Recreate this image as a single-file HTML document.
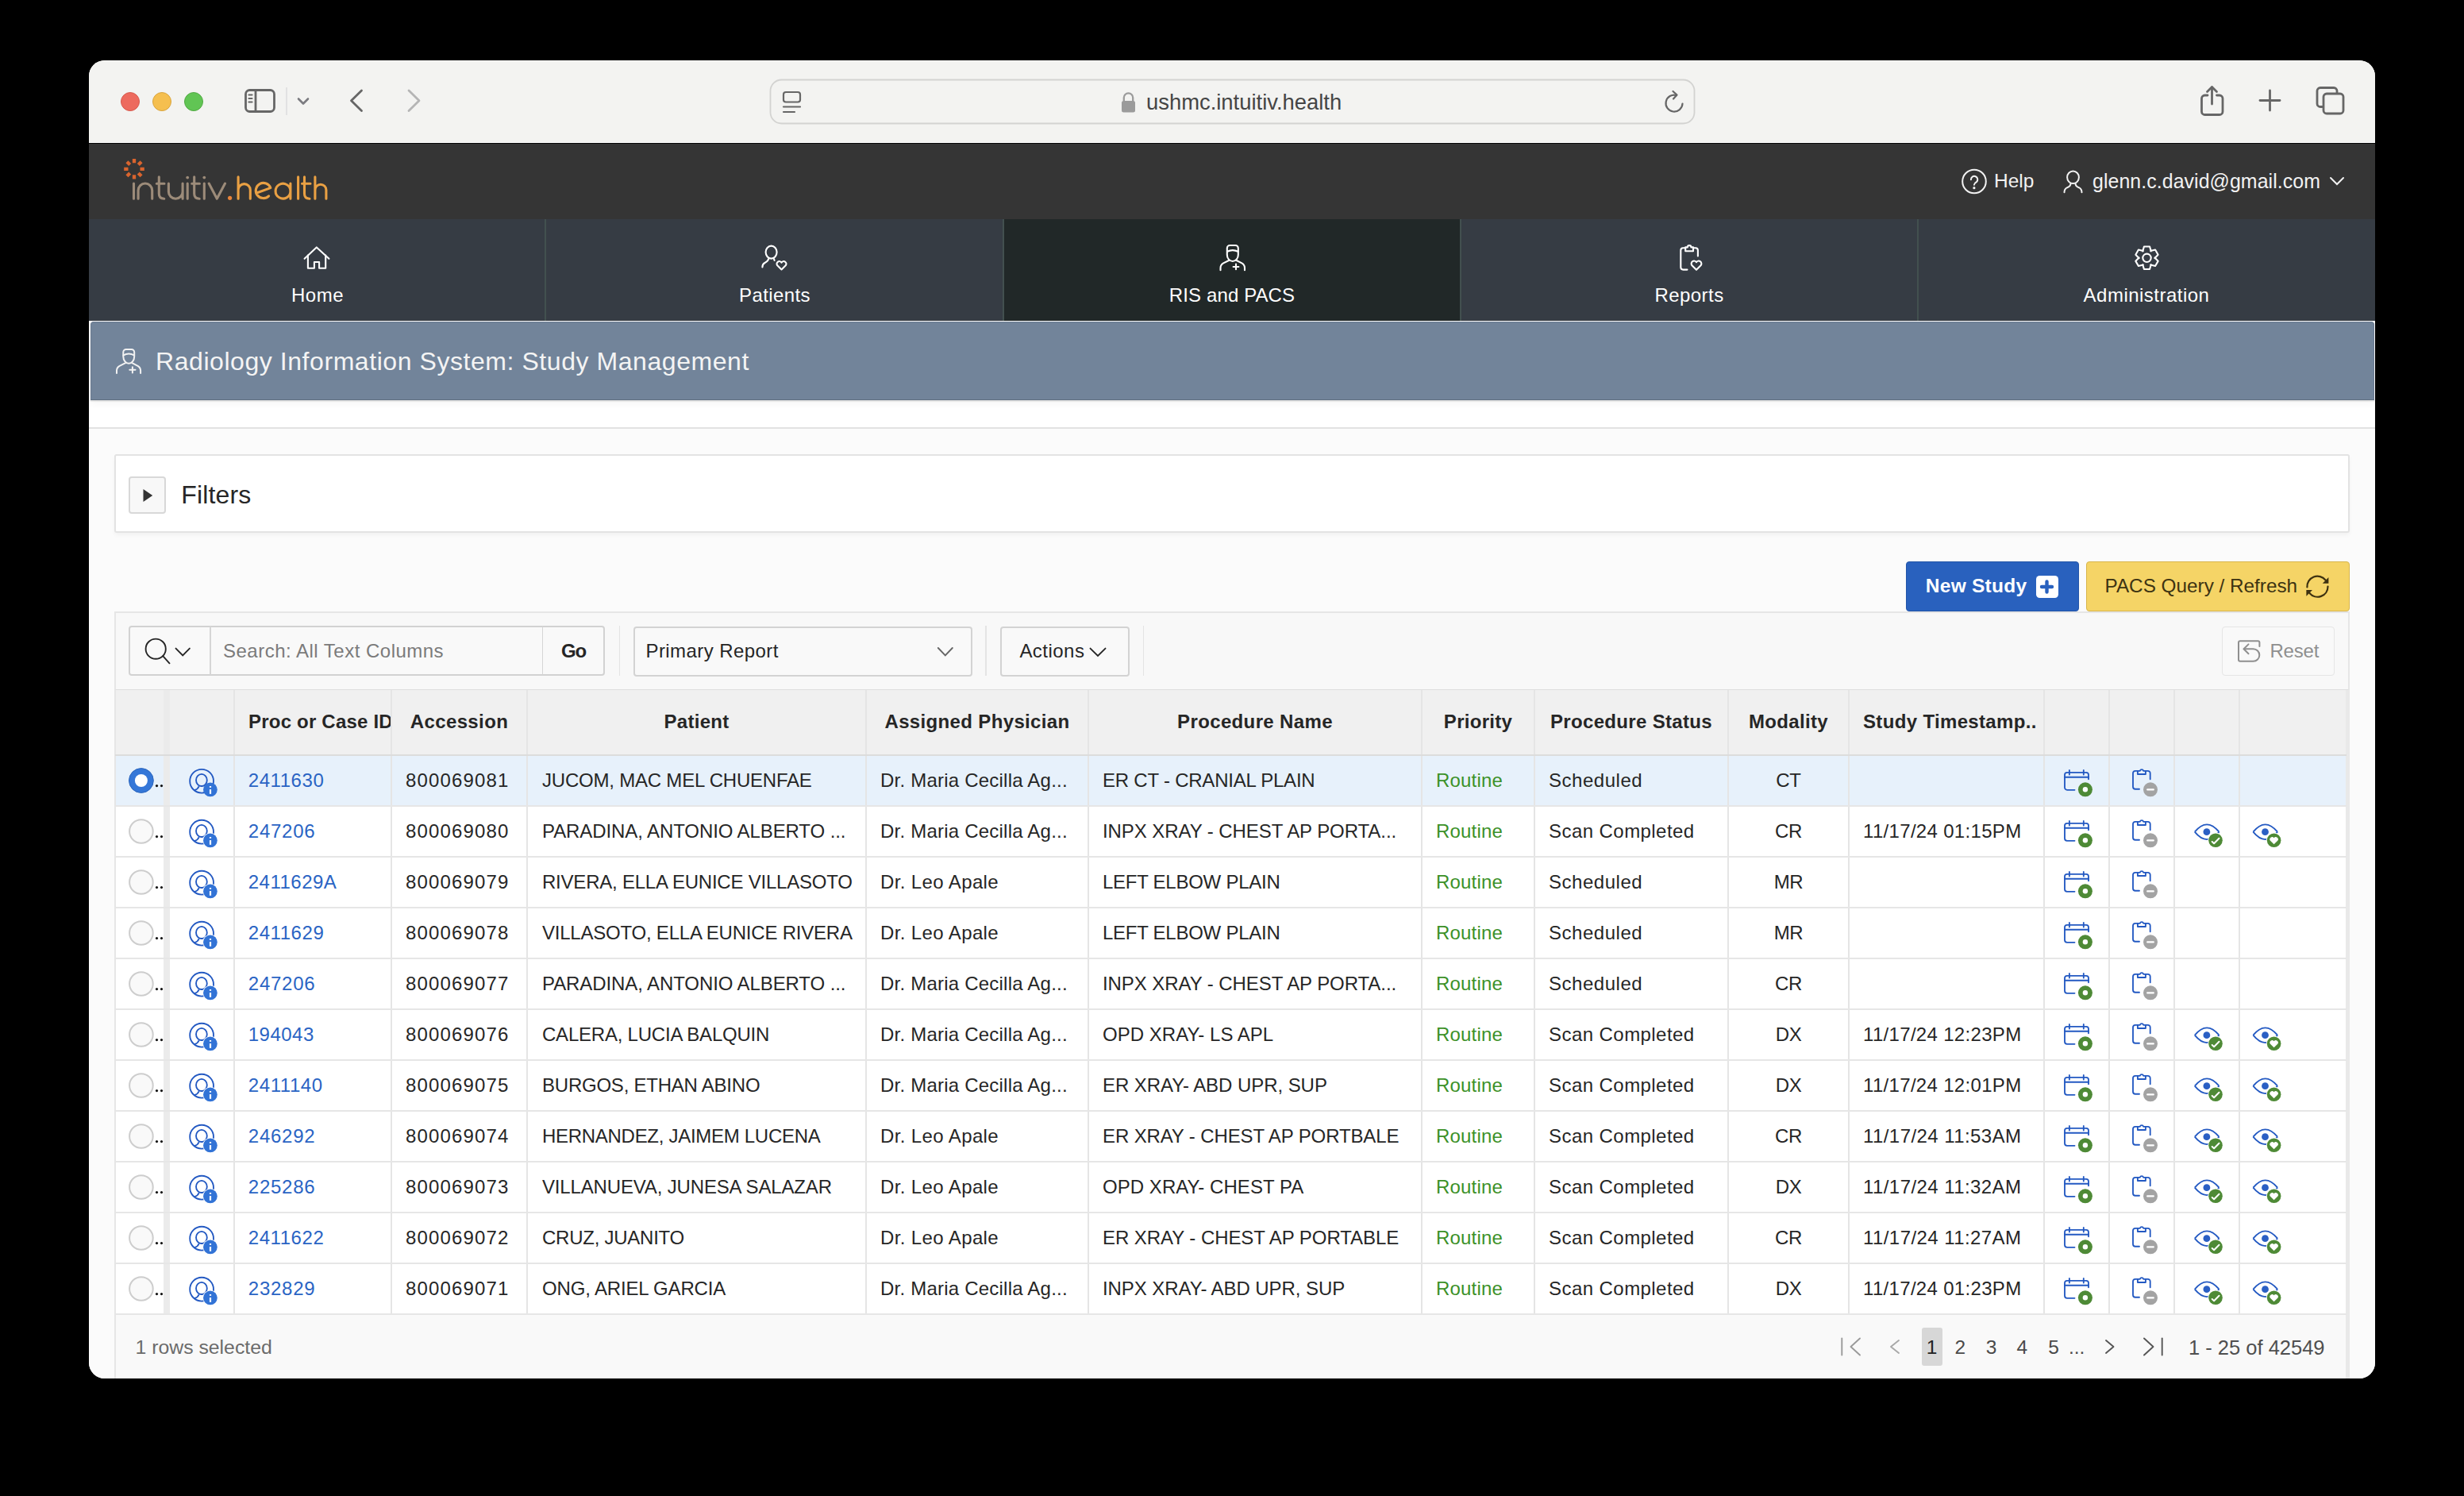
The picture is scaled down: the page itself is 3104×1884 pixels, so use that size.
<!DOCTYPE html>
<html><head><meta charset="utf-8"><title>RIS Study Management</title>
<style>
*{box-sizing:border-box;margin:0;padding:0}
html,body{width:3104px;height:1884px;background:#000;overflow:hidden}
body{font-family:"Liberation Sans", sans-serif;position:relative}
.win{position:absolute;left:112px;top:76px;width:2880px;height:1660px;border-radius:20px;overflow:hidden;background:#fafafa}
.in{position:absolute;left:-112px;top:-76px;width:3104px;height:1884px}
.a{position:absolute}
.t{position:absolute;white-space:nowrap}
svg{position:absolute;overflow:visible}
</style></head><body>
<div class="win"><div class="in">

<div class="a" style="left:112px;top:76px;width:2880px;height:103px;background:#f3f3f1"></div>
<div class="a" style="left:112px;top:179px;width:2880px;height:1px;background:#fff"></div>
<div class="a" style="left:112px;top:180px;width:2880px;height:1px;background:#060606"></div>
<div class="a" style="left:152px;top:116px;width:24px;height:24px;border-radius:50%;background:#ed6a5e;border:1px solid #d75a4e"></div>
<div class="a" style="left:192px;top:116px;width:24px;height:24px;border-radius:50%;background:#f5bf4f;border:1px solid #d9a53f"></div>
<div class="a" style="left:232px;top:116px;width:24px;height:24px;border-radius:50%;background:#61c554;border:1px solid #52a944"></div>
<svg style="left:0;top:0" width="3104" height="200" viewBox="0 0 3104 200">
<g fill="none" stroke="#666" stroke-width="2.8" stroke-linecap="round" stroke-linejoin="round">
<rect x="309.5" y="113.5" width="36" height="27" rx="5"/>
<line x1="322" y1="114" x2="322" y2="140"/>
<line x1="313.5" y1="119.5" x2="317.5" y2="119.5" stroke-width="2.2"/>
<line x1="313.5" y1="124" x2="317.5" y2="124" stroke-width="2.2"/>
<line x1="313.5" y1="128.5" x2="317.5" y2="128.5" stroke-width="2.2"/>
<polyline points="455.5,114 442.5,126.8 455.5,139.5"/>
<polyline points="515,114 528,126.8 515,139.5" stroke="#b5b5b5"/>
<polyline points="376,124.5 382,130.5 388,124.5" stroke="#7b7b80" stroke-width="2.6"/>
</g>
<line x1="361" y1="110" x2="361" y2="145" stroke="#dcdcdc" stroke-width="1.5"/>
<rect x="970.5" y="100.5" width="1164" height="55" rx="14" fill="#f3f3f1" stroke="#d3d3d1" stroke-width="1.8"/>
<g fill="none" stroke="#666" stroke-width="2.2" stroke-linecap="round">
<rect x="987" y="116" width="21" height="12.5" rx="3"/>
<line x1="987" y1="134.5" x2="1008" y2="134.5"/>
<line x1="987" y1="141" x2="1001" y2="141"/>
</g>
<g fill="#9b9b9b">
<rect x="1413" y="127" width="17" height="14.5" rx="2.5"/>
<path d="M1415.8,128 V123 a5.7,5.7 0 0 1 11.4,0 V128" fill="none" stroke="#9b9b9b" stroke-width="2.3"/>
</g>
<g fill="none" stroke="#666" stroke-width="2.2" stroke-linecap="round" stroke-linejoin="round">
<path d="M2119.5,130.5 A10.5,10.5 0 1 1 2112,120"/>
<polyline points="2107.5,115 2112.5,119.5 2108,124.5"/>
</g>
<g fill="none" stroke="#666" stroke-width="2.8" stroke-linecap="round" stroke-linejoin="round">
<path d="M2781,120 H2777.5 a4,4 0 0 0 -4,4 V140.5 a4,4 0 0 0 4,4 H2796 a4,4 0 0 0 4,-4 V124 a4,4 0 0 0 -4,-4 H2792.5"/>
<line x1="2786.5" y1="110" x2="2786.5" y2="131"/>
<polyline points="2780.5,115.5 2786.5,109.5 2792.5,115.5"/>
<line x1="2859.5" y1="114" x2="2859.5" y2="139"/>
<line x1="2847" y1="126.5" x2="2872" y2="126.5"/>
<path d="M2926.5,134.5 H2923 a4,4 0 0 1 -4,-4 V114.5 a4,4 0 0 1 4,-4 H2940 a4,4 0 0 1 4,4 V117.5"/>
<rect x="2927" y="118" width="25" height="25" rx="4"/>
</g>
</svg>
<div class="t" style="left:1444px;top:112.5px;font-size:27.4px;line-height:32px;color:#454545">ushmc.intuitiv.health</div>
<div class="a" style="left:112px;top:181px;width:2880px;height:95px;background:#353535"></div>
<svg style="left:0;top:0" width="600" height="300" viewBox="0 0 600 300"><line x1="169.00" y1="205.30" x2="169.00" y2="200.00" stroke="#d9642e" stroke-width="4.3"/><line x1="174.30" y1="207.50" x2="178.05" y2="203.75" stroke="#d9642e" stroke-width="4.3"/><line x1="176.50" y1="212.80" x2="181.80" y2="212.80" stroke="#d9642e" stroke-width="4.3"/><line x1="174.30" y1="218.10" x2="178.05" y2="221.85" stroke="#d9642e" stroke-width="4.3"/><line x1="169.00" y1="220.30" x2="169.00" y2="225.60" stroke="#d9642e" stroke-width="4.3"/><line x1="163.70" y1="218.10" x2="159.95" y2="221.85" stroke="#d9642e" stroke-width="4.3"/><line x1="161.50" y1="212.80" x2="156.20" y2="212.80" stroke="#d9642e" stroke-width="4.3"/><line x1="163.70" y1="207.50" x2="159.95" y2="203.75" stroke="#d9642e" stroke-width="4.3"/><path d="M168.5,231 V250.2 M174.1,250.2 V239.8 A8.8,8.8 0 0 1 191.7,239.8 V250.2 M200.3,222.8 V244 Q200.3,250.2 206.8,250.2 M197.3,231.2 H207 M212.4,231 V241.4 A8.85,8.85 0 0 0 230.1,241.4 M230.1,231 V250.2 M236.2,231 V250.2 M244.7,222.8 V244 Q244.7,250.2 251.2,250.2 M241.7,231.2 H251.4 M257.3,231 V250.2 M263.2,231 L273.3,250.2 L283.5,231" fill="none" stroke="#9c8b79" stroke-width="3.1" stroke-linecap="round" stroke-linejoin="round"/><circle cx="236.2" cy="223.6" r="1.9" fill="#9c8b79"/><circle cx="257.3" cy="223.6" r="1.9" fill="#9c8b79"/><circle cx="289.6" cy="249.3" r="2.6" fill="#e8843a"/><path d="M300.1,222.8 V250.2 M300.1,239.2 A7.6,7.6 0 0 1 315.3,239.2 V250.2 M322.6,243.2 L340.8,236.6 A9.6,9.6 0 1 0 338.6,246.8 M365.9,240.6 A9.4,9.4 0 1 0 365.9,240.7 M365.9,231 V250.2 M375.6,222.8 V250.2 M383.5,222.8 V244 Q383.5,250.2 390,250.2 M380.5,231.2 H391 M396.9,222.8 V250.2 M396.9,239.2 A7,7 0 0 1 410.9,239.2 V250.2" fill="none" stroke="#e9a043" stroke-width="3.1" stroke-linecap="round" stroke-linejoin="round"/></svg>
<svg style="left:0;top:0" width="3104" height="300" viewBox="0 0 3104 300">
<g fill="none" stroke="#f2f2f2" stroke-width="2" stroke-linecap="round">
<circle cx="2487" cy="228.5" r="14.8"/>
<path d="M2482.9,226.2 A4.2,4.2 0 1 1 2489.9,229.2 Q2486.9,231 2486.9,232.8"/>
<ellipse cx="2611.5" cy="223.3" rx="7.4" ry="7.8"/>
<path d="M2608.5,231 Q2608.5,234.6 2604.2,236.2 Q2600.5,237.8 2600.5,242.3 M2614.5,231 Q2614.5,234.6 2618.8,236.2 Q2622.5,237.8 2622.5,242.3"/>
<polyline points="2936,224 2944,232 2952,224"/>
</g>
<circle cx="2486.9" cy="236.7" r="1.6" fill="#f2f2f2"/>
</svg>
<div class="t" style="left:2512px;top:214px;font-size:24.5px;line-height:28px;color:#f2f2f2">Help</div>
<div class="t" style="left:2636px;top:214px;font-size:24.9px;line-height:28px;color:#f2f2f2;letter-spacing:0.07px;">glenn.c.david@gmail.com</div>
<div class="a" style="left:112px;top:276px;width:2880px;height:128px;background:#363c44"></div>
<div class="a" style="left:1264.5px;top:276px;width:575px;height:128px;background:#212828"></div>
<div class="a" style="left:686px;top:276px;width:1.5px;height:128px;background:#42504f"></div>
<div class="a" style="left:1263.2px;top:276px;width:1.5px;height:128px;background:#42504f"></div>
<div class="a" style="left:1839px;top:276px;width:1.5px;height:128px;background:#42504f"></div>
<div class="a" style="left:2415px;top:276px;width:1.5px;height:128px;background:#42504f"></div>
<div class="t" style="left:200px;top:357px;font-size:24px;line-height:30px;color:#fff;letter-spacing:0.53px;width:400px;text-align:center;">Home</div>
<div class="t" style="left:776px;top:357px;font-size:24px;line-height:30px;color:#fff;letter-spacing:0.42px;width:400px;text-align:center;">Patients</div>
<div class="t" style="left:1352px;top:357px;font-size:24px;line-height:30px;color:#fff;letter-spacing:0.11px;width:400px;text-align:center;">RIS and PACS</div>
<div class="t" style="left:1928px;top:357px;font-size:24px;line-height:30px;color:#fff;letter-spacing:0.45px;width:400px;text-align:center;">Reports</div>
<div class="t" style="left:2504px;top:357px;font-size:24px;line-height:30px;color:#fff;letter-spacing:0.48px;width:400px;text-align:center;">Administration</div>
<svg style="left:0;top:0" width="3104" height="420" viewBox="0 0 3104 420">
<g fill="none" stroke="#fff" stroke-width="2.1" stroke-linecap="round" stroke-linejoin="round">
<polyline points="383.6,325.8 398.8,311.4 414.4,325.8"/>
<path d="M387.9,321.5 V337.8 H395.9 V330 H402.1 V337.8 H410.2 V321.5"/>
<ellipse cx="971.6" cy="317.6" rx="7" ry="8"/>
<path d="M968.3,325.8 Q967.2,329.5 963.5,331 Q960.4,332.6 960.4,336.5"/>
<path d="M975,326 L975.6,328"/>
<path d="M984.5,339.5 L979,334 a3,3 0 0 1 5.5,-3.4 a3,3 0 0 1 5.5,3.4 Z"/>
<path d="M1545.8,321 V312.5 a3.5,3.5 0 0 1 3.5,-3.5 H1556.3 a3.5,3.5 0 0 1 3.5,3.5 V321 a7,8 0 0 1 -14,0"/>
<path d="M1546,316.8 Q1552.8,313.5 1559.6,316.8"/>
<path d="M1548.5,327.8 L1541.2,331.4 Q1537.5,333.4 1537.5,337.5 V340.3"/>
<path d="M1557.2,327.8 L1564.4,331.4 Q1568,333.4 1568,337.5 V340.3"/>
<path d="M1557,332.6 V339.2 M1553.6,336 H1560.4"/>
<path d="M2125.5,339.6 H2120.3 a3,3 0 0 1 -3,-3 V315.2 a3,3 0 0 1 3,-3 H2123.2 M2133,312.2 H2135.9 a3,3 0 0 1 3,3 V322.4"/>
<path d="M2123.2,316.2 V311.4 H2125.8 a2.3,2.3 0 0 1 4.6,0 H2133 V316.2 Z"/>
<path d="M2137,339.8 L2131.2,334 a3.2,3.2 0 0 1 5.8,-3.8 a3.2,3.2 0 0 1 5.8,3.8 Z"/>
</g>

<path d="M2699.25,316.40 L2700.94,310.54 L2708.06,310.54 L2709.75,316.40 L2709.15,316.06 L2715.07,314.59 L2718.63,320.75 L2714.39,325.15 L2714.39,324.45 L2718.63,328.85 L2715.07,335.01 L2709.15,333.54 L2709.75,333.20 L2708.06,339.06 L2700.94,339.06 L2699.25,333.20 L2699.85,333.54 L2693.93,335.01 L2690.37,328.85 L2694.61,324.45 L2694.61,325.15 L2690.37,320.75 L2693.93,314.59 L2699.85,316.06 Z" fill="none" stroke="#fff" stroke-width="2.1" stroke-linejoin="round"/><circle cx="2704.5" cy="324.8" r="5.2" fill="none" stroke="#fff" stroke-width="2.1"/>
</svg>
<div class="a" style="left:112px;top:505px;width:2880px;height:33px;background:#fff"></div>
<div class="a" style="left:112px;top:538px;width:2880px;height:2px;background:#e2e2e2"></div>
<div class="a" style="left:112px;top:540px;width:2880px;height:1196px;background:#fbfbfb"></div>
<div class="a" style="left:112px;top:404px;width:2880px;height:100px;background:#fff"></div>
<div class="a" style="left:114px;top:405px;width:2877px;height:99px;border-radius:4px 4px 0 0;background:#72849a;border:1px solid #6a7b90;border-bottom:1.5px solid #5f6e80;box-shadow:0 1.5px 1px rgba(0,0,0,.07),0 5px 9px rgba(0,0,0,.035)"></div>
<svg style="left:0;top:0" width="600" height="600" viewBox="0 0 600 600">
<g fill="none" stroke="#f2f2f2" stroke-width="2" stroke-linecap="round" stroke-linejoin="round">
<path d="M155.3,449 V443.6 a3.6,3.6 0 0 1 3.6,-3.6 H165.6 a3.6,3.6 0 0 1 3.6,3.6 V449 a6.95,8.7 0 0 1 -13.9,0"/>
<path d="M155.5,447.4 Q162.2,443.6 169,447.4"/>
<path d="M158,457.2 L150.6,460.8 Q147,462.8 147,466.8 V470.1"/>
<path d="M166.5,457.2 L173.6,460.8 Q177.1,462.8 177.1,466.8 V470.1"/>
<path d="M166.9,462.2 V469.4 M163.3,465.8 H170.5"/>
</g></svg>
<div class="t" style="left:196px;top:436px;font-size:32px;line-height:38px;color:#f4f4f4;letter-spacing:0.56px;">Radiology Information System: Study Management</div>
<div class="a" style="left:144px;top:572px;width:2816px;height:99px;background:#fff;border:2px solid #e3e3e3;border-radius:3px;box-shadow:0 3px 5px rgba(0,0,0,.04)"></div>
<div class="a" style="left:162px;top:600px;width:47px;height:47px;background:#f8f8f8;border:2px solid #d8d8d8;border-radius:4px"></div>
<svg style="left:0;top:0" width="400" height="700" viewBox="0 0 400 700"><path d="M180.5,616 L192.2,624 L180.5,632 Z" fill="#333"/></svg>
<div class="t" style="left:228.3px;top:604px;font-size:32px;line-height:38px;color:#262626;letter-spacing:0.16px;">Filters</div>
<div class="a" style="left:2401px;top:707px;width:218px;height:63px;background:#2961be;border:1.5px solid #2355a8;border-radius:4px"></div>
<div class="t" style="left:2425.8px;top:723px;font-size:24.5px;line-height:30px;color:#fff;letter-spacing:0.26px;font-weight:bold;">New Study</div>
<div class="a" style="left:2564.5px;top:724.5px;width:28px;height:28.5px;background:#fff;border-radius:4.5px"></div>
<svg style="left:0;top:0" width="3104" height="800" viewBox="0 0 3104 800"><path d="M2578.5,732.5 V745.5 M2572,739 H2585" stroke="#2961be" stroke-width="4.4" stroke-linecap="round"/></svg>
<div class="a" style="left:2628px;top:707px;width:332px;height:63px;background:#f5d466;border:1.5px solid #d8b64c;border-radius:4px"></div>
<div class="t" style="left:2651.5px;top:723px;font-size:24.3px;line-height:30px;color:#3d3312;letter-spacing:0.00px;">PACS Query / Refresh</div>
<svg style="left:0;top:0" width="3104" height="800" viewBox="0 0 3104 800">
<g fill="none" stroke="#3d3110" stroke-width="2.2" stroke-linecap="round">
<path d="M2906.4,739.5 A13,13 0 0 1 2929.5,730.5"/>
<path d="M2932.5,738.5 A13,13 0 0 1 2909.5,747"/>
</g>
<path d="M2933.4,727 L2933.4,734.8 L2925.8,734.8 Z" fill="#3d3110"/>
<path d="M2905.4,750.8 L2905.4,743 L2913,743 Z" fill="#3d3110"/>
</svg>
<div class="a" style="left:144px;top:770px;width:2816px;height:100px;background:#f8f8f8;border:2px solid #e6e6e6;border-bottom-color:#dedede"></div>
<div class="a" style="left:162px;top:788px;width:600px;height:63px;background:#f9f9f9;border:2px solid #d2d2d2;border-radius:4px"></div>
<div class="a" style="left:264px;top:789px;width:1.8px;height:61px;background:#d6d6d6"></div>
<div class="a" style="left:682.5px;top:789px;width:1.8px;height:61px;background:#d6d6d6"></div>
<div class="t" style="left:281px;top:805px;font-size:24px;line-height:30px;color:#7b7b7b;letter-spacing:0.49px;">Search: All Text Columns</div>
<div class="t" style="left:707px;top:805px;font-size:24px;line-height:30px;color:#262626;letter-spacing:-1.16px;font-weight:bold;">Go</div>
<div class="a" style="left:779.5px;top:788px;width:1.8px;height:63px;background:#e4e4e4"></div>
<div class="a" style="left:798px;top:789px;width:426.5px;height:62.5px;background:#f9f9f9;border:2px solid #d3d3d3;border-radius:4px"></div>
<div class="t" style="left:813.5px;top:805px;font-size:24px;line-height:30px;color:#262626;letter-spacing:0.42px;">Primary Report</div>
<div class="a" style="left:1240.8px;top:788px;width:1.8px;height:63px;background:#e4e4e4"></div>
<div class="a" style="left:1259.5px;top:789px;width:163.5px;height:62.5px;background:#f9f9f9;border:2px solid #d3d3d3;border-radius:4px"></div>
<div class="t" style="left:1284.4px;top:805px;font-size:24px;line-height:30px;color:#262626;letter-spacing:0.47px;">Actions</div>
<div class="a" style="left:1439.5px;top:788px;width:1.8px;height:63px;background:#e4e4e4"></div>
<div class="a" style="left:2798.5px;top:788.5px;width:142.5px;height:62.5px;background:#f9f9f9;border:1.8px solid #e5e5e5;border-radius:4px"></div>
<div class="t" style="left:2859.5px;top:805px;font-size:24px;line-height:30px;color:#8f8f8f;letter-spacing:-0.22px;">Reset</div>
<svg style="left:0;top:0" width="3104" height="900" viewBox="0 0 3104 900">
<g fill="none" stroke="#262626" stroke-width="1.9" stroke-linecap="round">
<circle cx="196.2" cy="817.2" r="12.6"/>
<line x1="205.2" y1="826.2" x2="213.5" y2="835.3"/>
<polyline points="221.5,816.6 230.2,825.4 238.9,816.6"/>
<polyline points="1373.5,816.6 1383,826 1392.5,816.6"/>
</g>
<polyline points="1181.8,816 1190.8,825.4 1199.8,816" fill="none" stroke="#666" stroke-width="1.9" stroke-linecap="round"/>
<g fill="none" stroke="#8f8f8f" stroke-width="2" stroke-linecap="round" stroke-linejoin="round">
<path d="M2846.4,814 V809.3 a2,2 0 0 0 -2,-2 H2822 a2,2 0 0 0 -2,2 V830.8 a2,2 0 0 0 2,2 H2838.5 a7.8,7.8 0 0 0 0,-15.6 H2826.8"/>
<polyline points="2832.5,811.4 2826.5,817.3 2832.5,823.2"/>
</g></svg>
<div class="a" style="left:145px;top:869px;width:2811px;height:82px;background:#f0f0f0"></div>
<div class="a" style="left:145px;top:951px;width:2811px;height:704px;background:#fff"></div>
<div class="a" style="left:145px;top:951px;width:2811px;height:64px;background:#e7f1fb"></div>
<div class="a" style="left:145px;top:1655px;width:2813px;height:81px;background:#f9f9f9"></div>
<div class="a" style="left:206px;top:869px;width:8px;height:786px;background:#ebebeb"></div>
<div class="a" style="left:294.25px;top:869px;width:1.6px;height:786px;background:#e5e5e5"></div>
<div class="a" style="left:492.25px;top:869px;width:1.6px;height:786px;background:#e5e5e5"></div>
<div class="a" style="left:663.25px;top:869px;width:1.6px;height:786px;background:#e5e5e5"></div>
<div class="a" style="left:1090.25px;top:869px;width:1.6px;height:786px;background:#e5e5e5"></div>
<div class="a" style="left:1370.25px;top:869px;width:1.6px;height:786px;background:#e5e5e5"></div>
<div class="a" style="left:1790.25px;top:869px;width:1.6px;height:786px;background:#e5e5e5"></div>
<div class="a" style="left:1932.25px;top:869px;width:1.6px;height:786px;background:#e5e5e5"></div>
<div class="a" style="left:2176.25px;top:869px;width:1.6px;height:786px;background:#e5e5e5"></div>
<div class="a" style="left:2328.25px;top:869px;width:1.6px;height:786px;background:#e5e5e5"></div>
<div class="a" style="left:2574.25px;top:869px;width:1.6px;height:786px;background:#e5e5e5"></div>
<div class="a" style="left:2656.25px;top:869px;width:1.6px;height:786px;background:#e5e5e5"></div>
<div class="a" style="left:2738.25px;top:869px;width:1.6px;height:786px;background:#e5e5e5"></div>
<div class="a" style="left:2820.25px;top:869px;width:1.6px;height:786px;background:#e5e5e5"></div>
<div class="a" style="left:2955px;top:869px;width:5px;height:867px;background:#e9e9e9"></div>
<div class="a" style="left:144px;top:869px;width:2px;height:867px;background:#e6e6e6"></div>
<div class="a" style="left:145px;top:950px;width:2811px;height:2px;background:#dcdcdc"></div>
<div class="a" style="left:145px;top:1014px;width:2811px;height:1.6px;background:#e6e6e6"></div>
<div class="a" style="left:145px;top:1078px;width:2811px;height:1.6px;background:#e6e6e6"></div>
<div class="a" style="left:145px;top:1142px;width:2811px;height:1.6px;background:#e6e6e6"></div>
<div class="a" style="left:145px;top:1206px;width:2811px;height:1.6px;background:#e6e6e6"></div>
<div class="a" style="left:145px;top:1270px;width:2811px;height:1.6px;background:#e6e6e6"></div>
<div class="a" style="left:145px;top:1334px;width:2811px;height:1.6px;background:#e6e6e6"></div>
<div class="a" style="left:145px;top:1398px;width:2811px;height:1.6px;background:#e6e6e6"></div>
<div class="a" style="left:145px;top:1462px;width:2811px;height:1.6px;background:#e6e6e6"></div>
<div class="a" style="left:145px;top:1526px;width:2811px;height:1.6px;background:#e6e6e6"></div>
<div class="a" style="left:145px;top:1590px;width:2811px;height:1.6px;background:#e6e6e6"></div>
<div class="a" style="left:145px;top:1654px;width:2811px;height:1.6px;background:#e6e6e6"></div>
<div class="t" style="left:313px;top:894px;font-size:24px;line-height:30px;color:#262626;letter-spacing:0.21px;font-weight:bold;width:179px;text-align:left;overflow:hidden">Proc or Case ID</div>
<div class="t" style="left:493px;top:894px;font-size:24px;line-height:30px;color:#262626;letter-spacing:0.38px;font-weight:bold;width:171px;text-align:center;">Accession</div>
<div class="t" style="left:664px;top:894px;font-size:24px;line-height:30px;color:#262626;letter-spacing:0.30px;font-weight:bold;width:427px;text-align:center;">Patient</div>
<div class="t" style="left:1091px;top:894px;font-size:24px;line-height:30px;color:#262626;letter-spacing:0.35px;font-weight:bold;width:280px;text-align:center;">Assigned Physician</div>
<div class="t" style="left:1371px;top:894px;font-size:24px;line-height:30px;color:#262626;letter-spacing:0.36px;font-weight:bold;width:420px;text-align:center;">Procedure Name</div>
<div class="t" style="left:1791px;top:894px;font-size:24px;line-height:30px;color:#262626;letter-spacing:0.28px;font-weight:bold;width:142px;text-align:center;">Priority</div>
<div class="t" style="left:1933px;top:894px;font-size:24px;line-height:30px;color:#262626;letter-spacing:0.33px;font-weight:bold;width:244px;text-align:center;">Procedure Status</div>
<div class="t" style="left:2177px;top:894px;font-size:24px;line-height:30px;color:#262626;letter-spacing:0.32px;font-weight:bold;width:152px;text-align:center;">Modality</div>
<div class="t" style="left:2347px;top:894px;font-size:24px;line-height:30px;color:#262626;letter-spacing:0.34px;font-weight:bold;width:227px;text-align:left;overflow:hidden">Study Timestamp..</div>
<div class="t" style="left:312.8px;top:968px;font-size:24px;line-height:30px;color:#2a64c4;letter-spacing:0.55px;">2411630</div>
<div class="t" style="left:511px;top:968px;font-size:24px;line-height:30px;color:#262626;letter-spacing:1.16px;">800069081</div>
<div class="t" style="left:683px;top:968px;font-size:24px;line-height:30px;color:#262626;letter-spacing:-0.21px;">JUCOM, MAC MEL CHUENFAE</div>
<div class="t" style="left:1109px;top:968px;font-size:24px;line-height:30px;color:#262626;letter-spacing:0.22px;">Dr. Maria Cecilla Ag...</div>
<div class="t" style="left:1389px;top:968px;font-size:24px;line-height:30px;color:#262626;letter-spacing:-0.22px;">ER CT - CRANIAL PLAIN</div>
<div class="t" style="left:1809px;top:968px;font-size:24px;line-height:30px;color:#3c9128;letter-spacing:0.18px;">Routine</div>
<div class="t" style="left:1951px;top:968px;font-size:24px;line-height:30px;color:#262626;letter-spacing:0.53px;">Scheduled</div>
<div class="t" style="left:2177px;top:968px;font-size:24px;line-height:30px;color:#262626;letter-spacing:-0.29px;width:152px;text-align:center;">CT</div>
<div class="t" style="left:312.8px;top:1032px;font-size:24px;line-height:30px;color:#2a64c4;letter-spacing:0.75px;">247206</div>
<div class="t" style="left:511px;top:1032px;font-size:24px;line-height:30px;color:#262626;letter-spacing:1.16px;">800069080</div>
<div class="t" style="left:683px;top:1032px;font-size:24px;line-height:30px;color:#262626;letter-spacing:-0.09px;">PARADINA, ANTONIO ALBERTO ...</div>
<div class="t" style="left:1109px;top:1032px;font-size:24px;line-height:30px;color:#262626;letter-spacing:0.22px;">Dr. Maria Cecilla Ag...</div>
<div class="t" style="left:1389px;top:1032px;font-size:24px;line-height:30px;color:#262626;letter-spacing:-0.07px;">INPX XRAY - CHEST AP PORTA...</div>
<div class="t" style="left:1809px;top:1032px;font-size:24px;line-height:30px;color:#3c9128;letter-spacing:0.18px;">Routine</div>
<div class="t" style="left:1951px;top:1032px;font-size:24px;line-height:30px;color:#262626;letter-spacing:0.44px;">Scan Completed</div>
<div class="t" style="left:2177px;top:1032px;font-size:24px;line-height:30px;color:#262626;letter-spacing:-0.31px;width:152px;text-align:center;">CR</div>
<div class="t" style="left:2347px;top:1032px;font-size:24px;line-height:30px;color:#262626;letter-spacing:0.32px;">11/17/24 01:15PM</div>
<div class="t" style="left:312.8px;top:1096px;font-size:24px;line-height:30px;color:#2a64c4;letter-spacing:0.48px;">2411629A</div>
<div class="t" style="left:511px;top:1096px;font-size:24px;line-height:30px;color:#262626;letter-spacing:1.16px;">800069079</div>
<div class="t" style="left:683px;top:1096px;font-size:24px;line-height:30px;color:#262626;letter-spacing:-0.22px;">RIVERA, ELLA EUNICE VILLASOTO</div>
<div class="t" style="left:1109px;top:1096px;font-size:24px;line-height:30px;color:#262626;letter-spacing:0.38px;">Dr. Leo Apale</div>
<div class="t" style="left:1389px;top:1096px;font-size:24px;line-height:30px;color:#262626;letter-spacing:-0.26px;">LEFT ELBOW PLAIN</div>
<div class="t" style="left:1809px;top:1096px;font-size:24px;line-height:30px;color:#3c9128;letter-spacing:0.18px;">Routine</div>
<div class="t" style="left:1951px;top:1096px;font-size:24px;line-height:30px;color:#262626;letter-spacing:0.53px;">Scheduled</div>
<div class="t" style="left:2177px;top:1096px;font-size:24px;line-height:30px;color:#262626;letter-spacing:-0.34px;width:152px;text-align:center;">MR</div>
<div class="t" style="left:312.8px;top:1160px;font-size:24px;line-height:30px;color:#2a64c4;letter-spacing:0.55px;">2411629</div>
<div class="t" style="left:511px;top:1160px;font-size:24px;line-height:30px;color:#262626;letter-spacing:1.16px;">800069078</div>
<div class="t" style="left:683px;top:1160px;font-size:24px;line-height:30px;color:#262626;letter-spacing:-0.22px;">VILLASOTO, ELLA EUNICE RIVERA</div>
<div class="t" style="left:1109px;top:1160px;font-size:24px;line-height:30px;color:#262626;letter-spacing:0.38px;">Dr. Leo Apale</div>
<div class="t" style="left:1389px;top:1160px;font-size:24px;line-height:30px;color:#262626;letter-spacing:-0.26px;">LEFT ELBOW PLAIN</div>
<div class="t" style="left:1809px;top:1160px;font-size:24px;line-height:30px;color:#3c9128;letter-spacing:0.18px;">Routine</div>
<div class="t" style="left:1951px;top:1160px;font-size:24px;line-height:30px;color:#262626;letter-spacing:0.53px;">Scheduled</div>
<div class="t" style="left:2177px;top:1160px;font-size:24px;line-height:30px;color:#262626;letter-spacing:-0.34px;width:152px;text-align:center;">MR</div>
<div class="t" style="left:312.8px;top:1224px;font-size:24px;line-height:30px;color:#2a64c4;letter-spacing:0.75px;">247206</div>
<div class="t" style="left:511px;top:1224px;font-size:24px;line-height:30px;color:#262626;letter-spacing:1.16px;">800069077</div>
<div class="t" style="left:683px;top:1224px;font-size:24px;line-height:30px;color:#262626;letter-spacing:-0.09px;">PARADINA, ANTONIO ALBERTO ...</div>
<div class="t" style="left:1109px;top:1224px;font-size:24px;line-height:30px;color:#262626;letter-spacing:0.22px;">Dr. Maria Cecilla Ag...</div>
<div class="t" style="left:1389px;top:1224px;font-size:24px;line-height:30px;color:#262626;letter-spacing:-0.07px;">INPX XRAY - CHEST AP PORTA...</div>
<div class="t" style="left:1809px;top:1224px;font-size:24px;line-height:30px;color:#3c9128;letter-spacing:0.18px;">Routine</div>
<div class="t" style="left:1951px;top:1224px;font-size:24px;line-height:30px;color:#262626;letter-spacing:0.53px;">Scheduled</div>
<div class="t" style="left:2177px;top:1224px;font-size:24px;line-height:30px;color:#262626;letter-spacing:-0.31px;width:152px;text-align:center;">CR</div>
<div class="t" style="left:312.8px;top:1288px;font-size:24px;line-height:30px;color:#2a64c4;letter-spacing:0.48px;">194043</div>
<div class="t" style="left:511px;top:1288px;font-size:24px;line-height:30px;color:#262626;letter-spacing:1.16px;">800069076</div>
<div class="t" style="left:683px;top:1288px;font-size:24px;line-height:30px;color:#262626;letter-spacing:-0.22px;">CALERA, LUCIA BALQUIN</div>
<div class="t" style="left:1109px;top:1288px;font-size:24px;line-height:30px;color:#262626;letter-spacing:0.22px;">Dr. Maria Cecilla Ag...</div>
<div class="t" style="left:1389px;top:1288px;font-size:24px;line-height:30px;color:#262626;letter-spacing:0.03px;">OPD XRAY- LS APL</div>
<div class="t" style="left:1809px;top:1288px;font-size:24px;line-height:30px;color:#3c9128;letter-spacing:0.18px;">Routine</div>
<div class="t" style="left:1951px;top:1288px;font-size:24px;line-height:30px;color:#262626;letter-spacing:0.44px;">Scan Completed</div>
<div class="t" style="left:2177px;top:1288px;font-size:24px;line-height:30px;color:#262626;letter-spacing:-0.30px;width:152px;text-align:center;">DX</div>
<div class="t" style="left:2347px;top:1288px;font-size:24px;line-height:30px;color:#262626;letter-spacing:0.32px;">11/17/24 12:23PM</div>
<div class="t" style="left:312.8px;top:1352px;font-size:24px;line-height:30px;color:#2a64c4;letter-spacing:0.57px;">2411140</div>
<div class="t" style="left:511px;top:1352px;font-size:24px;line-height:30px;color:#262626;letter-spacing:1.16px;">800069075</div>
<div class="t" style="left:683px;top:1352px;font-size:24px;line-height:30px;color:#262626;letter-spacing:-0.23px;">BURGOS, ETHAN ABINO</div>
<div class="t" style="left:1109px;top:1352px;font-size:24px;line-height:30px;color:#262626;letter-spacing:0.22px;">Dr. Maria Cecilla Ag...</div>
<div class="t" style="left:1389px;top:1352px;font-size:24px;line-height:30px;color:#262626;letter-spacing:-0.06px;">ER XRAY- ABD UPR, SUP</div>
<div class="t" style="left:1809px;top:1352px;font-size:24px;line-height:30px;color:#3c9128;letter-spacing:0.18px;">Routine</div>
<div class="t" style="left:1951px;top:1352px;font-size:24px;line-height:30px;color:#262626;letter-spacing:0.44px;">Scan Completed</div>
<div class="t" style="left:2177px;top:1352px;font-size:24px;line-height:30px;color:#262626;letter-spacing:-0.30px;width:152px;text-align:center;">DX</div>
<div class="t" style="left:2347px;top:1352px;font-size:24px;line-height:30px;color:#262626;letter-spacing:0.32px;">11/17/24 12:01PM</div>
<div class="t" style="left:312.8px;top:1416px;font-size:24px;line-height:30px;color:#2a64c4;letter-spacing:0.75px;">246292</div>
<div class="t" style="left:511px;top:1416px;font-size:24px;line-height:30px;color:#262626;letter-spacing:1.16px;">800069074</div>
<div class="t" style="left:683px;top:1416px;font-size:24px;line-height:30px;color:#262626;letter-spacing:-0.29px;">HERNANDEZ, JAIMEM LUCENA</div>
<div class="t" style="left:1109px;top:1416px;font-size:24px;line-height:30px;color:#262626;letter-spacing:0.38px;">Dr. Leo Apale</div>
<div class="t" style="left:1389px;top:1416px;font-size:24px;line-height:30px;color:#262626;letter-spacing:-0.12px;">ER XRAY - CHEST AP PORTBALE</div>
<div class="t" style="left:1809px;top:1416px;font-size:24px;line-height:30px;color:#3c9128;letter-spacing:0.18px;">Routine</div>
<div class="t" style="left:1951px;top:1416px;font-size:24px;line-height:30px;color:#262626;letter-spacing:0.44px;">Scan Completed</div>
<div class="t" style="left:2177px;top:1416px;font-size:24px;line-height:30px;color:#262626;letter-spacing:-0.31px;width:152px;text-align:center;">CR</div>
<div class="t" style="left:2347px;top:1416px;font-size:24px;line-height:30px;color:#262626;letter-spacing:0.43px;">11/17/24 11:53AM</div>
<div class="t" style="left:312.8px;top:1480px;font-size:24px;line-height:30px;color:#2a64c4;letter-spacing:0.75px;">225286</div>
<div class="t" style="left:511px;top:1480px;font-size:24px;line-height:30px;color:#262626;letter-spacing:1.16px;">800069073</div>
<div class="t" style="left:683px;top:1480px;font-size:24px;line-height:30px;color:#262626;letter-spacing:-0.16px;">VILLANUEVA, JUNESA SALAZAR</div>
<div class="t" style="left:1109px;top:1480px;font-size:24px;line-height:30px;color:#262626;letter-spacing:0.38px;">Dr. Leo Apale</div>
<div class="t" style="left:1389px;top:1480px;font-size:24px;line-height:30px;color:#262626;letter-spacing:0.04px;">OPD XRAY- CHEST PA</div>
<div class="t" style="left:1809px;top:1480px;font-size:24px;line-height:30px;color:#3c9128;letter-spacing:0.18px;">Routine</div>
<div class="t" style="left:1951px;top:1480px;font-size:24px;line-height:30px;color:#262626;letter-spacing:0.44px;">Scan Completed</div>
<div class="t" style="left:2177px;top:1480px;font-size:24px;line-height:30px;color:#262626;letter-spacing:-0.30px;width:152px;text-align:center;">DX</div>
<div class="t" style="left:2347px;top:1480px;font-size:24px;line-height:30px;color:#262626;letter-spacing:0.43px;">11/17/24 11:32AM</div>
<div class="t" style="left:312.8px;top:1544px;font-size:24px;line-height:30px;color:#2a64c4;letter-spacing:0.55px;">2411622</div>
<div class="t" style="left:511px;top:1544px;font-size:24px;line-height:30px;color:#262626;letter-spacing:1.16px;">800069072</div>
<div class="t" style="left:683px;top:1544px;font-size:24px;line-height:30px;color:#262626;letter-spacing:-0.25px;">CRUZ, JUANITO</div>
<div class="t" style="left:1109px;top:1544px;font-size:24px;line-height:30px;color:#262626;letter-spacing:0.38px;">Dr. Leo Apale</div>
<div class="t" style="left:1389px;top:1544px;font-size:24px;line-height:30px;color:#262626;letter-spacing:-0.06px;">ER XRAY - CHEST AP PORTABLE</div>
<div class="t" style="left:1809px;top:1544px;font-size:24px;line-height:30px;color:#3c9128;letter-spacing:0.18px;">Routine</div>
<div class="t" style="left:1951px;top:1544px;font-size:24px;line-height:30px;color:#262626;letter-spacing:0.44px;">Scan Completed</div>
<div class="t" style="left:2177px;top:1544px;font-size:24px;line-height:30px;color:#262626;letter-spacing:-0.31px;width:152px;text-align:center;">CR</div>
<div class="t" style="left:2347px;top:1544px;font-size:24px;line-height:30px;color:#262626;letter-spacing:0.43px;">11/17/24 11:27AM</div>
<div class="t" style="left:312.8px;top:1608px;font-size:24px;line-height:30px;color:#2a64c4;letter-spacing:0.75px;">232829</div>
<div class="t" style="left:511px;top:1608px;font-size:24px;line-height:30px;color:#262626;letter-spacing:1.16px;">800069071</div>
<div class="t" style="left:683px;top:1608px;font-size:24px;line-height:30px;color:#262626;letter-spacing:-0.16px;">ONG, ARIEL GARCIA</div>
<div class="t" style="left:1109px;top:1608px;font-size:24px;line-height:30px;color:#262626;letter-spacing:0.22px;">Dr. Maria Cecilla Ag...</div>
<div class="t" style="left:1389px;top:1608px;font-size:24px;line-height:30px;color:#262626;letter-spacing:-0.07px;">INPX XRAY- ABD UPR, SUP</div>
<div class="t" style="left:1809px;top:1608px;font-size:24px;line-height:30px;color:#3c9128;letter-spacing:0.18px;">Routine</div>
<div class="t" style="left:1951px;top:1608px;font-size:24px;line-height:30px;color:#262626;letter-spacing:0.44px;">Scan Completed</div>
<div class="t" style="left:2177px;top:1608px;font-size:24px;line-height:30px;color:#262626;letter-spacing:-0.30px;width:152px;text-align:center;">DX</div>
<div class="t" style="left:2347px;top:1608px;font-size:24px;line-height:30px;color:#262626;letter-spacing:0.32px;">11/17/24 01:23PM</div>
<svg style="left:0;top:0" width="3104" height="1884" viewBox="0 0 3104 1884"><circle cx="177.9" cy="983" r="15.4" fill="#3577d8" stroke="#2c66bd" stroke-width="1"/><circle cx="177.9" cy="983" r="8" fill="#fff"/><circle cx="197.5" cy="989.6" r="1.6" fill="#111"/><circle cx="203.5" cy="989.6" r="1.6" fill="#111"/><g fill="none" stroke="#2359c2" stroke-width="1.85"><circle cx="254.1" cy="983.7" r="14.9"/><ellipse cx="253.9" cy="982.4" rx="6.9" ry="7.6"/><path d="M250.6,990.2 Q249.5,993.5 245.2,995.1"/></g><circle cx="264.9" cy="994.4" r="9.6" fill="#fff" opacity="0"/><circle cx="264.9" cy="994.4" r="8.85" fill="#3273d6"/><rect x="263.9" y="990" width="2.2" height="1.8" fill="#fff"/><rect x="263.9" y="994.1" width="2.2" height="5.7" fill="#fff"/><g fill="none" stroke="#2359c2" stroke-width="1.85" stroke-linecap="round" stroke-linejoin="round"><path d="M2613.5,994.8 H2604 a3,3 0 0 1 -3,-3 V975.8 a3,3 0 0 1 3,-3 H2628 a3,3 0 0 1 3,3 V981.3"/><line x1="2601" y1="978.7" x2="2631" y2="978.7"/><line x1="2606.9" y1="970" x2="2606.9" y2="975.5"/><line x1="2624.8" y1="970" x2="2624.8" y2="975.5"/></g><circle cx="2626.9" cy="994.3" r="9" fill="#4e8a36"/><circle cx="2626.9" cy="994.3" r="3.2" fill="#fff"/><g fill="none" stroke="#2359c2" stroke-width="1.85" stroke-linecap="round" stroke-linejoin="round"><path d="M2695,993.7 H2690 a3,3 0 0 1 -3,-3 V973.8 a3,3 0 0 1 3,-3 H2692.9 M2702.9,970.8 H2705.7 a3,3 0 0 1 3,3 V981.3"/><path d="M2692.9,975 V970.8 H2695.8 a2.3,2.3 0 0 1 4.4,0 H2702.9 V975 Z"/></g><circle cx="2709" cy="994.3" r="9" fill="#a3a3a3"/><rect x="2704.1" y="993.2" width="9.8" height="2.3" rx="1.1" fill="#fff"/><circle cx="177.9" cy="1047" r="14.8" fill="#f9f9f9" stroke="#cdcdcd" stroke-width="2"/><circle cx="197.5" cy="1053.6" r="1.6" fill="#111"/><circle cx="203.5" cy="1053.6" r="1.6" fill="#111"/><g fill="none" stroke="#2359c2" stroke-width="1.85"><circle cx="254.1" cy="1047.7" r="14.9"/><ellipse cx="253.9" cy="1046.4" rx="6.9" ry="7.6"/><path d="M250.6,1054.2 Q249.5,1057.5 245.2,1059.1"/></g><circle cx="264.9" cy="1058.4" r="9.6" fill="#fff" opacity="1"/><circle cx="264.9" cy="1058.4" r="8.85" fill="#3273d6"/><rect x="263.9" y="1054" width="2.2" height="1.8" fill="#fff"/><rect x="263.9" y="1058.1" width="2.2" height="5.7" fill="#fff"/><g fill="none" stroke="#2359c2" stroke-width="1.85" stroke-linecap="round" stroke-linejoin="round"><path d="M2613.5,1058.8 H2604 a3,3 0 0 1 -3,-3 V1039.8 a3,3 0 0 1 3,-3 H2628 a3,3 0 0 1 3,3 V1045.3"/><line x1="2601" y1="1042.7" x2="2631" y2="1042.7"/><line x1="2606.9" y1="1034" x2="2606.9" y2="1039.5"/><line x1="2624.8" y1="1034" x2="2624.8" y2="1039.5"/></g><circle cx="2626.9" cy="1058.3" r="9" fill="#4e8a36"/><circle cx="2626.9" cy="1058.3" r="3.2" fill="#fff"/><g fill="none" stroke="#2359c2" stroke-width="1.85" stroke-linecap="round" stroke-linejoin="round"><path d="M2695,1057.7 H2690 a3,3 0 0 1 -3,-3 V1037.8 a3,3 0 0 1 3,-3 H2692.9 M2702.9,1034.8 H2705.7 a3,3 0 0 1 3,3 V1045.3"/><path d="M2692.9,1039 V1034.8 H2695.8 a2.3,2.3 0 0 1 4.4,0 H2702.9 V1039 Z"/></g><circle cx="2709" cy="1058.3" r="9" fill="#a3a3a3"/><rect x="2704.1" y="1057.2" width="9.8" height="2.3" rx="1.1" fill="#fff"/><path d="M2764.8,1047.7 Q2780.0,1029 2795.5,1047.7 M2764.8,1047.7 Q2780.0,1066.4 2795.5,1047.7" fill="none" stroke="#2359c2" stroke-width="1.85" stroke-linejoin="round"/><circle cx="2779.9" cy="1047.7" r="4.4" fill="#2a5fc4"/><circle cx="2791.0" cy="1058.2" r="9.8" fill="#fff"/><circle cx="2791.0" cy="1058.2" r="8.8" fill="#4e8a36"/><polyline points="2786.7,1060.0 2789.1,1062.2 2795.5,1055.8" fill="none" stroke="#fff" stroke-width="2" stroke-linecap="round" stroke-linejoin="round"/><path d="M2838.4,1047.7 Q2853.6,1029 2869.1,1047.7 M2838.4,1047.7 Q2853.6,1066.4 2869.1,1047.7" fill="none" stroke="#2359c2" stroke-width="1.85" stroke-linejoin="round"/><circle cx="2853.5" cy="1047.7" r="4.4" fill="#2a5fc4"/><circle cx="2864.6" cy="1058.2" r="9.8" fill="#fff"/><circle cx="2864.6" cy="1058.2" r="8.8" fill="#4e8a36"/><path d="M2864.6,1063.2 L2860.0,1058.8 a2.7,2.7 0 0 1 4.6,-3.6 a2.7,2.7 0 0 1 4.6,3.6 Z" fill="#fff"/><circle cx="177.9" cy="1111" r="14.8" fill="#f9f9f9" stroke="#cdcdcd" stroke-width="2"/><circle cx="197.5" cy="1117.6" r="1.6" fill="#111"/><circle cx="203.5" cy="1117.6" r="1.6" fill="#111"/><g fill="none" stroke="#2359c2" stroke-width="1.85"><circle cx="254.1" cy="1111.7" r="14.9"/><ellipse cx="253.9" cy="1110.4" rx="6.9" ry="7.6"/><path d="M250.6,1118.2 Q249.5,1121.5 245.2,1123.1"/></g><circle cx="264.9" cy="1122.4" r="9.6" fill="#fff" opacity="1"/><circle cx="264.9" cy="1122.4" r="8.85" fill="#3273d6"/><rect x="263.9" y="1118" width="2.2" height="1.8" fill="#fff"/><rect x="263.9" y="1122.1" width="2.2" height="5.7" fill="#fff"/><g fill="none" stroke="#2359c2" stroke-width="1.85" stroke-linecap="round" stroke-linejoin="round"><path d="M2613.5,1122.8 H2604 a3,3 0 0 1 -3,-3 V1103.8 a3,3 0 0 1 3,-3 H2628 a3,3 0 0 1 3,3 V1109.3"/><line x1="2601" y1="1106.7" x2="2631" y2="1106.7"/><line x1="2606.9" y1="1098" x2="2606.9" y2="1103.5"/><line x1="2624.8" y1="1098" x2="2624.8" y2="1103.5"/></g><circle cx="2626.9" cy="1122.3" r="9" fill="#4e8a36"/><circle cx="2626.9" cy="1122.3" r="3.2" fill="#fff"/><g fill="none" stroke="#2359c2" stroke-width="1.85" stroke-linecap="round" stroke-linejoin="round"><path d="M2695,1121.7 H2690 a3,3 0 0 1 -3,-3 V1101.8 a3,3 0 0 1 3,-3 H2692.9 M2702.9,1098.8 H2705.7 a3,3 0 0 1 3,3 V1109.3"/><path d="M2692.9,1103 V1098.8 H2695.8 a2.3,2.3 0 0 1 4.4,0 H2702.9 V1103 Z"/></g><circle cx="2709" cy="1122.3" r="9" fill="#a3a3a3"/><rect x="2704.1" y="1121.2" width="9.8" height="2.3" rx="1.1" fill="#fff"/><circle cx="177.9" cy="1175" r="14.8" fill="#f9f9f9" stroke="#cdcdcd" stroke-width="2"/><circle cx="197.5" cy="1181.6" r="1.6" fill="#111"/><circle cx="203.5" cy="1181.6" r="1.6" fill="#111"/><g fill="none" stroke="#2359c2" stroke-width="1.85"><circle cx="254.1" cy="1175.7" r="14.9"/><ellipse cx="253.9" cy="1174.4" rx="6.9" ry="7.6"/><path d="M250.6,1182.2 Q249.5,1185.5 245.2,1187.1"/></g><circle cx="264.9" cy="1186.4" r="9.6" fill="#fff" opacity="1"/><circle cx="264.9" cy="1186.4" r="8.85" fill="#3273d6"/><rect x="263.9" y="1182" width="2.2" height="1.8" fill="#fff"/><rect x="263.9" y="1186.1" width="2.2" height="5.7" fill="#fff"/><g fill="none" stroke="#2359c2" stroke-width="1.85" stroke-linecap="round" stroke-linejoin="round"><path d="M2613.5,1186.8 H2604 a3,3 0 0 1 -3,-3 V1167.8 a3,3 0 0 1 3,-3 H2628 a3,3 0 0 1 3,3 V1173.3"/><line x1="2601" y1="1170.7" x2="2631" y2="1170.7"/><line x1="2606.9" y1="1162" x2="2606.9" y2="1167.5"/><line x1="2624.8" y1="1162" x2="2624.8" y2="1167.5"/></g><circle cx="2626.9" cy="1186.3" r="9" fill="#4e8a36"/><circle cx="2626.9" cy="1186.3" r="3.2" fill="#fff"/><g fill="none" stroke="#2359c2" stroke-width="1.85" stroke-linecap="round" stroke-linejoin="round"><path d="M2695,1185.7 H2690 a3,3 0 0 1 -3,-3 V1165.8 a3,3 0 0 1 3,-3 H2692.9 M2702.9,1162.8 H2705.7 a3,3 0 0 1 3,3 V1173.3"/><path d="M2692.9,1167 V1162.8 H2695.8 a2.3,2.3 0 0 1 4.4,0 H2702.9 V1167 Z"/></g><circle cx="2709" cy="1186.3" r="9" fill="#a3a3a3"/><rect x="2704.1" y="1185.2" width="9.8" height="2.3" rx="1.1" fill="#fff"/><circle cx="177.9" cy="1239" r="14.8" fill="#f9f9f9" stroke="#cdcdcd" stroke-width="2"/><circle cx="197.5" cy="1245.6" r="1.6" fill="#111"/><circle cx="203.5" cy="1245.6" r="1.6" fill="#111"/><g fill="none" stroke="#2359c2" stroke-width="1.85"><circle cx="254.1" cy="1239.7" r="14.9"/><ellipse cx="253.9" cy="1238.4" rx="6.9" ry="7.6"/><path d="M250.6,1246.2 Q249.5,1249.5 245.2,1251.1"/></g><circle cx="264.9" cy="1250.4" r="9.6" fill="#fff" opacity="1"/><circle cx="264.9" cy="1250.4" r="8.85" fill="#3273d6"/><rect x="263.9" y="1246" width="2.2" height="1.8" fill="#fff"/><rect x="263.9" y="1250.1" width="2.2" height="5.7" fill="#fff"/><g fill="none" stroke="#2359c2" stroke-width="1.85" stroke-linecap="round" stroke-linejoin="round"><path d="M2613.5,1250.8 H2604 a3,3 0 0 1 -3,-3 V1231.8 a3,3 0 0 1 3,-3 H2628 a3,3 0 0 1 3,3 V1237.3"/><line x1="2601" y1="1234.7" x2="2631" y2="1234.7"/><line x1="2606.9" y1="1226" x2="2606.9" y2="1231.5"/><line x1="2624.8" y1="1226" x2="2624.8" y2="1231.5"/></g><circle cx="2626.9" cy="1250.3" r="9" fill="#4e8a36"/><circle cx="2626.9" cy="1250.3" r="3.2" fill="#fff"/><g fill="none" stroke="#2359c2" stroke-width="1.85" stroke-linecap="round" stroke-linejoin="round"><path d="M2695,1249.7 H2690 a3,3 0 0 1 -3,-3 V1229.8 a3,3 0 0 1 3,-3 H2692.9 M2702.9,1226.8 H2705.7 a3,3 0 0 1 3,3 V1237.3"/><path d="M2692.9,1231 V1226.8 H2695.8 a2.3,2.3 0 0 1 4.4,0 H2702.9 V1231 Z"/></g><circle cx="2709" cy="1250.3" r="9" fill="#a3a3a3"/><rect x="2704.1" y="1249.2" width="9.8" height="2.3" rx="1.1" fill="#fff"/><circle cx="177.9" cy="1303" r="14.8" fill="#f9f9f9" stroke="#cdcdcd" stroke-width="2"/><circle cx="197.5" cy="1309.6" r="1.6" fill="#111"/><circle cx="203.5" cy="1309.6" r="1.6" fill="#111"/><g fill="none" stroke="#2359c2" stroke-width="1.85"><circle cx="254.1" cy="1303.7" r="14.9"/><ellipse cx="253.9" cy="1302.4" rx="6.9" ry="7.6"/><path d="M250.6,1310.2 Q249.5,1313.5 245.2,1315.1"/></g><circle cx="264.9" cy="1314.4" r="9.6" fill="#fff" opacity="1"/><circle cx="264.9" cy="1314.4" r="8.85" fill="#3273d6"/><rect x="263.9" y="1310" width="2.2" height="1.8" fill="#fff"/><rect x="263.9" y="1314.1" width="2.2" height="5.7" fill="#fff"/><g fill="none" stroke="#2359c2" stroke-width="1.85" stroke-linecap="round" stroke-linejoin="round"><path d="M2613.5,1314.8 H2604 a3,3 0 0 1 -3,-3 V1295.8 a3,3 0 0 1 3,-3 H2628 a3,3 0 0 1 3,3 V1301.3"/><line x1="2601" y1="1298.7" x2="2631" y2="1298.7"/><line x1="2606.9" y1="1290" x2="2606.9" y2="1295.5"/><line x1="2624.8" y1="1290" x2="2624.8" y2="1295.5"/></g><circle cx="2626.9" cy="1314.3" r="9" fill="#4e8a36"/><circle cx="2626.9" cy="1314.3" r="3.2" fill="#fff"/><g fill="none" stroke="#2359c2" stroke-width="1.85" stroke-linecap="round" stroke-linejoin="round"><path d="M2695,1313.7 H2690 a3,3 0 0 1 -3,-3 V1293.8 a3,3 0 0 1 3,-3 H2692.9 M2702.9,1290.8 H2705.7 a3,3 0 0 1 3,3 V1301.3"/><path d="M2692.9,1295 V1290.8 H2695.8 a2.3,2.3 0 0 1 4.4,0 H2702.9 V1295 Z"/></g><circle cx="2709" cy="1314.3" r="9" fill="#a3a3a3"/><rect x="2704.1" y="1313.2" width="9.8" height="2.3" rx="1.1" fill="#fff"/><path d="M2764.8,1303.7 Q2780.0,1285 2795.5,1303.7 M2764.8,1303.7 Q2780.0,1322.4 2795.5,1303.7" fill="none" stroke="#2359c2" stroke-width="1.85" stroke-linejoin="round"/><circle cx="2779.9" cy="1303.7" r="4.4" fill="#2a5fc4"/><circle cx="2791.0" cy="1314.2" r="9.8" fill="#fff"/><circle cx="2791.0" cy="1314.2" r="8.8" fill="#4e8a36"/><polyline points="2786.7,1316.0 2789.1,1318.2 2795.5,1311.8" fill="none" stroke="#fff" stroke-width="2" stroke-linecap="round" stroke-linejoin="round"/><path d="M2838.4,1303.7 Q2853.6,1285 2869.1,1303.7 M2838.4,1303.7 Q2853.6,1322.4 2869.1,1303.7" fill="none" stroke="#2359c2" stroke-width="1.85" stroke-linejoin="round"/><circle cx="2853.5" cy="1303.7" r="4.4" fill="#2a5fc4"/><circle cx="2864.6" cy="1314.2" r="9.8" fill="#fff"/><circle cx="2864.6" cy="1314.2" r="8.8" fill="#4e8a36"/><path d="M2864.6,1319.2 L2860.0,1314.8 a2.7,2.7 0 0 1 4.6,-3.6 a2.7,2.7 0 0 1 4.6,3.6 Z" fill="#fff"/><circle cx="177.9" cy="1367" r="14.8" fill="#f9f9f9" stroke="#cdcdcd" stroke-width="2"/><circle cx="197.5" cy="1373.6" r="1.6" fill="#111"/><circle cx="203.5" cy="1373.6" r="1.6" fill="#111"/><g fill="none" stroke="#2359c2" stroke-width="1.85"><circle cx="254.1" cy="1367.7" r="14.9"/><ellipse cx="253.9" cy="1366.4" rx="6.9" ry="7.6"/><path d="M250.6,1374.2 Q249.5,1377.5 245.2,1379.1"/></g><circle cx="264.9" cy="1378.4" r="9.6" fill="#fff" opacity="1"/><circle cx="264.9" cy="1378.4" r="8.85" fill="#3273d6"/><rect x="263.9" y="1374" width="2.2" height="1.8" fill="#fff"/><rect x="263.9" y="1378.1" width="2.2" height="5.7" fill="#fff"/><g fill="none" stroke="#2359c2" stroke-width="1.85" stroke-linecap="round" stroke-linejoin="round"><path d="M2613.5,1378.8 H2604 a3,3 0 0 1 -3,-3 V1359.8 a3,3 0 0 1 3,-3 H2628 a3,3 0 0 1 3,3 V1365.3"/><line x1="2601" y1="1362.7" x2="2631" y2="1362.7"/><line x1="2606.9" y1="1354" x2="2606.9" y2="1359.5"/><line x1="2624.8" y1="1354" x2="2624.8" y2="1359.5"/></g><circle cx="2626.9" cy="1378.3" r="9" fill="#4e8a36"/><circle cx="2626.9" cy="1378.3" r="3.2" fill="#fff"/><g fill="none" stroke="#2359c2" stroke-width="1.85" stroke-linecap="round" stroke-linejoin="round"><path d="M2695,1377.7 H2690 a3,3 0 0 1 -3,-3 V1357.8 a3,3 0 0 1 3,-3 H2692.9 M2702.9,1354.8 H2705.7 a3,3 0 0 1 3,3 V1365.3"/><path d="M2692.9,1359 V1354.8 H2695.8 a2.3,2.3 0 0 1 4.4,0 H2702.9 V1359 Z"/></g><circle cx="2709" cy="1378.3" r="9" fill="#a3a3a3"/><rect x="2704.1" y="1377.2" width="9.8" height="2.3" rx="1.1" fill="#fff"/><path d="M2764.8,1367.7 Q2780.0,1349 2795.5,1367.7 M2764.8,1367.7 Q2780.0,1386.4 2795.5,1367.7" fill="none" stroke="#2359c2" stroke-width="1.85" stroke-linejoin="round"/><circle cx="2779.9" cy="1367.7" r="4.4" fill="#2a5fc4"/><circle cx="2791.0" cy="1378.2" r="9.8" fill="#fff"/><circle cx="2791.0" cy="1378.2" r="8.8" fill="#4e8a36"/><polyline points="2786.7,1380.0 2789.1,1382.2 2795.5,1375.8" fill="none" stroke="#fff" stroke-width="2" stroke-linecap="round" stroke-linejoin="round"/><path d="M2838.4,1367.7 Q2853.6,1349 2869.1,1367.7 M2838.4,1367.7 Q2853.6,1386.4 2869.1,1367.7" fill="none" stroke="#2359c2" stroke-width="1.85" stroke-linejoin="round"/><circle cx="2853.5" cy="1367.7" r="4.4" fill="#2a5fc4"/><circle cx="2864.6" cy="1378.2" r="9.8" fill="#fff"/><circle cx="2864.6" cy="1378.2" r="8.8" fill="#4e8a36"/><path d="M2864.6,1383.2 L2860.0,1378.8 a2.7,2.7 0 0 1 4.6,-3.6 a2.7,2.7 0 0 1 4.6,3.6 Z" fill="#fff"/><circle cx="177.9" cy="1431" r="14.8" fill="#f9f9f9" stroke="#cdcdcd" stroke-width="2"/><circle cx="197.5" cy="1437.6" r="1.6" fill="#111"/><circle cx="203.5" cy="1437.6" r="1.6" fill="#111"/><g fill="none" stroke="#2359c2" stroke-width="1.85"><circle cx="254.1" cy="1431.7" r="14.9"/><ellipse cx="253.9" cy="1430.4" rx="6.9" ry="7.6"/><path d="M250.6,1438.2 Q249.5,1441.5 245.2,1443.1"/></g><circle cx="264.9" cy="1442.4" r="9.6" fill="#fff" opacity="1"/><circle cx="264.9" cy="1442.4" r="8.85" fill="#3273d6"/><rect x="263.9" y="1438" width="2.2" height="1.8" fill="#fff"/><rect x="263.9" y="1442.1" width="2.2" height="5.7" fill="#fff"/><g fill="none" stroke="#2359c2" stroke-width="1.85" stroke-linecap="round" stroke-linejoin="round"><path d="M2613.5,1442.8 H2604 a3,3 0 0 1 -3,-3 V1423.8 a3,3 0 0 1 3,-3 H2628 a3,3 0 0 1 3,3 V1429.3"/><line x1="2601" y1="1426.7" x2="2631" y2="1426.7"/><line x1="2606.9" y1="1418" x2="2606.9" y2="1423.5"/><line x1="2624.8" y1="1418" x2="2624.8" y2="1423.5"/></g><circle cx="2626.9" cy="1442.3" r="9" fill="#4e8a36"/><circle cx="2626.9" cy="1442.3" r="3.2" fill="#fff"/><g fill="none" stroke="#2359c2" stroke-width="1.85" stroke-linecap="round" stroke-linejoin="round"><path d="M2695,1441.7 H2690 a3,3 0 0 1 -3,-3 V1421.8 a3,3 0 0 1 3,-3 H2692.9 M2702.9,1418.8 H2705.7 a3,3 0 0 1 3,3 V1429.3"/><path d="M2692.9,1423 V1418.8 H2695.8 a2.3,2.3 0 0 1 4.4,0 H2702.9 V1423 Z"/></g><circle cx="2709" cy="1442.3" r="9" fill="#a3a3a3"/><rect x="2704.1" y="1441.2" width="9.8" height="2.3" rx="1.1" fill="#fff"/><path d="M2764.8,1431.7 Q2780.0,1413 2795.5,1431.7 M2764.8,1431.7 Q2780.0,1450.4 2795.5,1431.7" fill="none" stroke="#2359c2" stroke-width="1.85" stroke-linejoin="round"/><circle cx="2779.9" cy="1431.7" r="4.4" fill="#2a5fc4"/><circle cx="2791.0" cy="1442.2" r="9.8" fill="#fff"/><circle cx="2791.0" cy="1442.2" r="8.8" fill="#4e8a36"/><polyline points="2786.7,1444.0 2789.1,1446.2 2795.5,1439.8" fill="none" stroke="#fff" stroke-width="2" stroke-linecap="round" stroke-linejoin="round"/><path d="M2838.4,1431.7 Q2853.6,1413 2869.1,1431.7 M2838.4,1431.7 Q2853.6,1450.4 2869.1,1431.7" fill="none" stroke="#2359c2" stroke-width="1.85" stroke-linejoin="round"/><circle cx="2853.5" cy="1431.7" r="4.4" fill="#2a5fc4"/><circle cx="2864.6" cy="1442.2" r="9.8" fill="#fff"/><circle cx="2864.6" cy="1442.2" r="8.8" fill="#4e8a36"/><path d="M2864.6,1447.2 L2860.0,1442.8 a2.7,2.7 0 0 1 4.6,-3.6 a2.7,2.7 0 0 1 4.6,3.6 Z" fill="#fff"/><circle cx="177.9" cy="1495" r="14.8" fill="#f9f9f9" stroke="#cdcdcd" stroke-width="2"/><circle cx="197.5" cy="1501.6" r="1.6" fill="#111"/><circle cx="203.5" cy="1501.6" r="1.6" fill="#111"/><g fill="none" stroke="#2359c2" stroke-width="1.85"><circle cx="254.1" cy="1495.7" r="14.9"/><ellipse cx="253.9" cy="1494.4" rx="6.9" ry="7.6"/><path d="M250.6,1502.2 Q249.5,1505.5 245.2,1507.1"/></g><circle cx="264.9" cy="1506.4" r="9.6" fill="#fff" opacity="1"/><circle cx="264.9" cy="1506.4" r="8.85" fill="#3273d6"/><rect x="263.9" y="1502" width="2.2" height="1.8" fill="#fff"/><rect x="263.9" y="1506.1" width="2.2" height="5.7" fill="#fff"/><g fill="none" stroke="#2359c2" stroke-width="1.85" stroke-linecap="round" stroke-linejoin="round"><path d="M2613.5,1506.8 H2604 a3,3 0 0 1 -3,-3 V1487.8 a3,3 0 0 1 3,-3 H2628 a3,3 0 0 1 3,3 V1493.3"/><line x1="2601" y1="1490.7" x2="2631" y2="1490.7"/><line x1="2606.9" y1="1482" x2="2606.9" y2="1487.5"/><line x1="2624.8" y1="1482" x2="2624.8" y2="1487.5"/></g><circle cx="2626.9" cy="1506.3" r="9" fill="#4e8a36"/><circle cx="2626.9" cy="1506.3" r="3.2" fill="#fff"/><g fill="none" stroke="#2359c2" stroke-width="1.85" stroke-linecap="round" stroke-linejoin="round"><path d="M2695,1505.7 H2690 a3,3 0 0 1 -3,-3 V1485.8 a3,3 0 0 1 3,-3 H2692.9 M2702.9,1482.8 H2705.7 a3,3 0 0 1 3,3 V1493.3"/><path d="M2692.9,1487 V1482.8 H2695.8 a2.3,2.3 0 0 1 4.4,0 H2702.9 V1487 Z"/></g><circle cx="2709" cy="1506.3" r="9" fill="#a3a3a3"/><rect x="2704.1" y="1505.2" width="9.8" height="2.3" rx="1.1" fill="#fff"/><path d="M2764.8,1495.7 Q2780.0,1477 2795.5,1495.7 M2764.8,1495.7 Q2780.0,1514.4 2795.5,1495.7" fill="none" stroke="#2359c2" stroke-width="1.85" stroke-linejoin="round"/><circle cx="2779.9" cy="1495.7" r="4.4" fill="#2a5fc4"/><circle cx="2791.0" cy="1506.2" r="9.8" fill="#fff"/><circle cx="2791.0" cy="1506.2" r="8.8" fill="#4e8a36"/><polyline points="2786.7,1508.0 2789.1,1510.2 2795.5,1503.8" fill="none" stroke="#fff" stroke-width="2" stroke-linecap="round" stroke-linejoin="round"/><path d="M2838.4,1495.7 Q2853.6,1477 2869.1,1495.7 M2838.4,1495.7 Q2853.6,1514.4 2869.1,1495.7" fill="none" stroke="#2359c2" stroke-width="1.85" stroke-linejoin="round"/><circle cx="2853.5" cy="1495.7" r="4.4" fill="#2a5fc4"/><circle cx="2864.6" cy="1506.2" r="9.8" fill="#fff"/><circle cx="2864.6" cy="1506.2" r="8.8" fill="#4e8a36"/><path d="M2864.6,1511.2 L2860.0,1506.8 a2.7,2.7 0 0 1 4.6,-3.6 a2.7,2.7 0 0 1 4.6,3.6 Z" fill="#fff"/><circle cx="177.9" cy="1559" r="14.8" fill="#f9f9f9" stroke="#cdcdcd" stroke-width="2"/><circle cx="197.5" cy="1565.6" r="1.6" fill="#111"/><circle cx="203.5" cy="1565.6" r="1.6" fill="#111"/><g fill="none" stroke="#2359c2" stroke-width="1.85"><circle cx="254.1" cy="1559.7" r="14.9"/><ellipse cx="253.9" cy="1558.4" rx="6.9" ry="7.6"/><path d="M250.6,1566.2 Q249.5,1569.5 245.2,1571.1"/></g><circle cx="264.9" cy="1570.4" r="9.6" fill="#fff" opacity="1"/><circle cx="264.9" cy="1570.4" r="8.85" fill="#3273d6"/><rect x="263.9" y="1566" width="2.2" height="1.8" fill="#fff"/><rect x="263.9" y="1570.1" width="2.2" height="5.7" fill="#fff"/><g fill="none" stroke="#2359c2" stroke-width="1.85" stroke-linecap="round" stroke-linejoin="round"><path d="M2613.5,1570.8 H2604 a3,3 0 0 1 -3,-3 V1551.8 a3,3 0 0 1 3,-3 H2628 a3,3 0 0 1 3,3 V1557.3"/><line x1="2601" y1="1554.7" x2="2631" y2="1554.7"/><line x1="2606.9" y1="1546" x2="2606.9" y2="1551.5"/><line x1="2624.8" y1="1546" x2="2624.8" y2="1551.5"/></g><circle cx="2626.9" cy="1570.3" r="9" fill="#4e8a36"/><circle cx="2626.9" cy="1570.3" r="3.2" fill="#fff"/><g fill="none" stroke="#2359c2" stroke-width="1.85" stroke-linecap="round" stroke-linejoin="round"><path d="M2695,1569.7 H2690 a3,3 0 0 1 -3,-3 V1549.8 a3,3 0 0 1 3,-3 H2692.9 M2702.9,1546.8 H2705.7 a3,3 0 0 1 3,3 V1557.3"/><path d="M2692.9,1551 V1546.8 H2695.8 a2.3,2.3 0 0 1 4.4,0 H2702.9 V1551 Z"/></g><circle cx="2709" cy="1570.3" r="9" fill="#a3a3a3"/><rect x="2704.1" y="1569.2" width="9.8" height="2.3" rx="1.1" fill="#fff"/><path d="M2764.8,1559.7 Q2780.0,1541 2795.5,1559.7 M2764.8,1559.7 Q2780.0,1578.4 2795.5,1559.7" fill="none" stroke="#2359c2" stroke-width="1.85" stroke-linejoin="round"/><circle cx="2779.9" cy="1559.7" r="4.4" fill="#2a5fc4"/><circle cx="2791.0" cy="1570.2" r="9.8" fill="#fff"/><circle cx="2791.0" cy="1570.2" r="8.8" fill="#4e8a36"/><polyline points="2786.7,1572.0 2789.1,1574.2 2795.5,1567.8" fill="none" stroke="#fff" stroke-width="2" stroke-linecap="round" stroke-linejoin="round"/><path d="M2838.4,1559.7 Q2853.6,1541 2869.1,1559.7 M2838.4,1559.7 Q2853.6,1578.4 2869.1,1559.7" fill="none" stroke="#2359c2" stroke-width="1.85" stroke-linejoin="round"/><circle cx="2853.5" cy="1559.7" r="4.4" fill="#2a5fc4"/><circle cx="2864.6" cy="1570.2" r="9.8" fill="#fff"/><circle cx="2864.6" cy="1570.2" r="8.8" fill="#4e8a36"/><path d="M2864.6,1575.2 L2860.0,1570.8 a2.7,2.7 0 0 1 4.6,-3.6 a2.7,2.7 0 0 1 4.6,3.6 Z" fill="#fff"/><circle cx="177.9" cy="1623" r="14.8" fill="#f9f9f9" stroke="#cdcdcd" stroke-width="2"/><circle cx="197.5" cy="1629.6" r="1.6" fill="#111"/><circle cx="203.5" cy="1629.6" r="1.6" fill="#111"/><g fill="none" stroke="#2359c2" stroke-width="1.85"><circle cx="254.1" cy="1623.7" r="14.9"/><ellipse cx="253.9" cy="1622.4" rx="6.9" ry="7.6"/><path d="M250.6,1630.2 Q249.5,1633.5 245.2,1635.1"/></g><circle cx="264.9" cy="1634.4" r="9.6" fill="#fff" opacity="1"/><circle cx="264.9" cy="1634.4" r="8.85" fill="#3273d6"/><rect x="263.9" y="1630" width="2.2" height="1.8" fill="#fff"/><rect x="263.9" y="1634.1" width="2.2" height="5.7" fill="#fff"/><g fill="none" stroke="#2359c2" stroke-width="1.85" stroke-linecap="round" stroke-linejoin="round"><path d="M2613.5,1634.8 H2604 a3,3 0 0 1 -3,-3 V1615.8 a3,3 0 0 1 3,-3 H2628 a3,3 0 0 1 3,3 V1621.3"/><line x1="2601" y1="1618.7" x2="2631" y2="1618.7"/><line x1="2606.9" y1="1610" x2="2606.9" y2="1615.5"/><line x1="2624.8" y1="1610" x2="2624.8" y2="1615.5"/></g><circle cx="2626.9" cy="1634.3" r="9" fill="#4e8a36"/><circle cx="2626.9" cy="1634.3" r="3.2" fill="#fff"/><g fill="none" stroke="#2359c2" stroke-width="1.85" stroke-linecap="round" stroke-linejoin="round"><path d="M2695,1633.7 H2690 a3,3 0 0 1 -3,-3 V1613.8 a3,3 0 0 1 3,-3 H2692.9 M2702.9,1610.8 H2705.7 a3,3 0 0 1 3,3 V1621.3"/><path d="M2692.9,1615 V1610.8 H2695.8 a2.3,2.3 0 0 1 4.4,0 H2702.9 V1615 Z"/></g><circle cx="2709" cy="1634.3" r="9" fill="#a3a3a3"/><rect x="2704.1" y="1633.2" width="9.8" height="2.3" rx="1.1" fill="#fff"/><path d="M2764.8,1623.7 Q2780.0,1605 2795.5,1623.7 M2764.8,1623.7 Q2780.0,1642.4 2795.5,1623.7" fill="none" stroke="#2359c2" stroke-width="1.85" stroke-linejoin="round"/><circle cx="2779.9" cy="1623.7" r="4.4" fill="#2a5fc4"/><circle cx="2791.0" cy="1634.2" r="9.8" fill="#fff"/><circle cx="2791.0" cy="1634.2" r="8.8" fill="#4e8a36"/><polyline points="2786.7,1636.0 2789.1,1638.2 2795.5,1631.8" fill="none" stroke="#fff" stroke-width="2" stroke-linecap="round" stroke-linejoin="round"/><path d="M2838.4,1623.7 Q2853.6,1605 2869.1,1623.7 M2838.4,1623.7 Q2853.6,1642.4 2869.1,1623.7" fill="none" stroke="#2359c2" stroke-width="1.85" stroke-linejoin="round"/><circle cx="2853.5" cy="1623.7" r="4.4" fill="#2a5fc4"/><circle cx="2864.6" cy="1634.2" r="9.8" fill="#fff"/><circle cx="2864.6" cy="1634.2" r="8.8" fill="#4e8a36"/><path d="M2864.6,1639.2 L2860.0,1634.8 a2.7,2.7 0 0 1 4.6,-3.6 a2.7,2.7 0 0 1 4.6,3.6 Z" fill="#fff"/></svg>
<div class="t" style="left:170.5px;top:1681.5px;font-size:24.8px;line-height:30px;color:#6b6b6b">1 rows selected</div>
<div class="a" style="left:2420.5px;top:1672px;width:26.5px;height:48px;background:#d7d7d7;border-radius:3px"></div>
<div class="t" style="left:2413.7px;width:40px;text-align:center;top:1681.5px;font-size:24.5px;line-height:30px;color:#222">1</div>
<div class="t" style="left:2449.4px;width:40px;text-align:center;top:1681.5px;font-size:24.5px;line-height:30px;color:#4a4a4a">2</div>
<div class="t" style="left:2488.6px;width:40px;text-align:center;top:1681.5px;font-size:24.5px;line-height:30px;color:#4a4a4a">3</div>
<div class="t" style="left:2527.3px;width:40px;text-align:center;top:1681.5px;font-size:24.5px;line-height:30px;color:#4a4a4a">4</div>
<div class="t" style="left:2567px;width:40px;text-align:center;top:1681.5px;font-size:24.5px;line-height:30px;color:#4a4a4a">5</div>
<div class="t" style="left:2606px;top:1681.5px;font-size:24.5px;line-height:30px;color:#4a4a4a">...</div>
<div class="t" style="left:2757px;top:1681.5px;font-size:25.5px;line-height:30px;color:#4f4f4f">1 - 25 of 42549</div>
<svg style="left:0;top:0" width="3104" height="1884" viewBox="0 0 3104 1884">
<g fill="none" stroke-width="1.9" stroke-linecap="round" stroke-linejoin="round">
<line x1="2320.3" y1="1685.5" x2="2320.3" y2="1706.5" stroke="#9a9a9a"/>
<polyline points="2343,1685.5 2331.5,1696 2343,1706.5" stroke="#9a9a9a"/>
<polyline points="2392,1688 2382,1696 2392,1704" stroke="#a8a8a8"/>
<polyline points="2653,1688 2662.5,1696 2653,1704" stroke="#555"/>
<polyline points="2701,1685.5 2712.5,1696 2701,1706.5" stroke="#555"/>
<line x1="2723.7" y1="1685.5" x2="2723.7" y2="1706.5" stroke="#555"/>
</g></svg>
</div></div></body></html>
